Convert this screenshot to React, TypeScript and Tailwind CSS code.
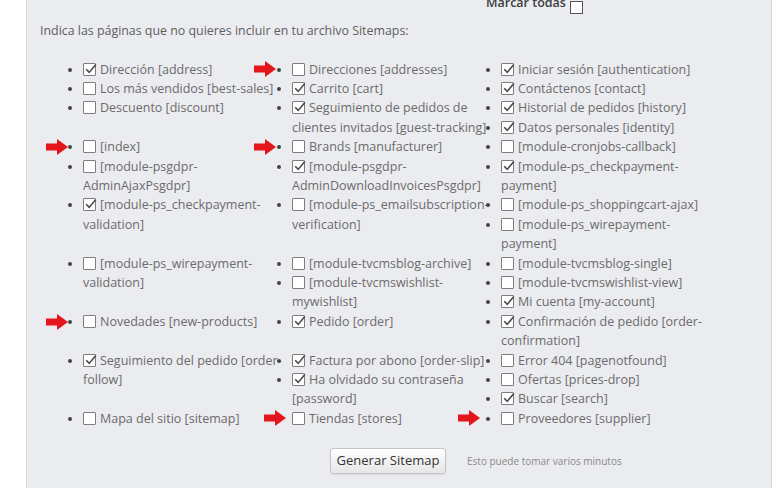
import React from "react";

type Item = { label: string; checked: boolean };

const items: Item[] = [
  { label: "Dirección [address]", checked: true },
  { label: "Direcciones [addresses]", checked: false },
  { label: "Iniciar sesión [authentication]", checked: true },
  { label: "Los más vendidos [best-sales]", checked: false },
  { label: "Carrito [cart]", checked: true },
  { label: "Contáctenos [contact]", checked: true },
  { label: "Descuento [discount]", checked: false },
  { label: "Seguimiento de pedidos de clientes invitados [guest-tracking]", checked: true },
  { label: "Historial de pedidos [history]", checked: true },
  { label: "Datos personales [identity]", checked: true },
  { label: "[index]", checked: false },
  { label: "Brands [manufacturer]", checked: false },
  { label: "[module-cronjobs-callback]", checked: false },
  { label: "[module-psgdpr-AdminAjaxPsgdpr]", checked: false },
  { label: "[module-psgdpr-AdminDownloadInvoicesPsgdpr]", checked: true },
  { label: "[module-ps_checkpayment-payment]", checked: true },
  { label: "[module-ps_checkpayment-validation]", checked: true },
  { label: "[module-ps_emailsubscription-verification]", checked: false },
  { label: "[module-ps_shoppingcart-ajax]", checked: false },
  { label: "[module-ps_wirepayment-payment]", checked: false },
  { label: "[module-ps_wirepayment-validation]", checked: false },
  { label: "[module-tvcmsblog-archive]", checked: false },
  { label: "[module-tvcmsblog-single]", checked: false },
  { label: "[module-tvcmswishlist-mywishlist]", checked: false },
  { label: "[module-tvcmswishlist-view]", checked: false },
  { label: "Mi cuenta [my-account]", checked: true },
  { label: "Novedades [new-products]", checked: false },
  { label: "Pedido [order]", checked: true },
  { label: "Confirmación de pedido [order-confirmation]", checked: true },
  { label: "Seguimiento del pedido [order-follow]", checked: true },
  { label: "Factura por abono [order-slip]", checked: true },
  { label: "Error 404 [pagenotfound]", checked: false },
  { label: "Ha olvidado su contraseña [password]", checked: true },
  { label: "Ofertas [prices-drop]", checked: false },
  { label: "Buscar [search]", checked: true },
  { label: "Mapa del sitio [sitemap]", checked: false },
  { label: "Tiendas [stores]", checked: false },
  { label: "Proveedores [supplier]", checked: false },
];

function Box({ checked }: { checked: boolean }) {
  return (
    <span className="relative inline-block w-[13px] h-[13px] mr-[4px] align-[-2px] border border-[#7d7d7d] bg-white rounded-[1px]">
      {checked && (
        <svg
          className="absolute left-[0px] top-[-2px]"
          width="14"
          height="14"
          viewBox="0 0 14 14"
          fill="none"
        >
          <path d="M2.2 7.2 L5.2 10.4 L11.8 2.6" stroke="#4a4a4a" strokeWidth="1.6" />
        </svg>
      )}
    </span>
  );
}

function Arrow({ className }: { className: string }) {
  return (
    <svg
      className={"absolute " + className}
      width="22"
      height="16"
      viewBox="0 0 22 16"
    >
      <polygon points="0,4.5 11,4.5 11,0 22,8 11,16 11,11.5 0,11.5" fill="#e5161b" />
    </svg>
  );
}

export default function App() {
  return (
    <div className="relative w-[781px] h-[500px] overflow-hidden bg-white font-['Open_Sans',sans-serif]">
      <div className="h-full pl-[26px] pr-[9px] pt-[7px]">
        <div className="h-full bg-[#ebecf0] border-l border-r border-[#d9dadf]">
          <div className="-mt-[12px] h-[21px] flex items-start pl-[459px] gap-[4px] text-[12.5px] leading-[15px] font-semibold text-[#3d3d3d]">
            <span>Marcar todas</span>
            <span className="mt-[6px] inline-block w-[13px] h-[13px] border border-[#555] bg-white" />
          </div>
          <p className="ml-[13px] mt-[4.5px] text-[12.4px] leading-[19px] text-[#5e5e5e]">
            Indica las páginas que no quieres incluir en tu archivo Sitemaps:
          </p>
          <ul className="flow-root ml-[56px] mt-[20px] w-[627px] list-disc text-[12.5px] leading-[19.4px] text-[#6b6b6b] marker:text-[#444] marker:text-[11px]">
            {items.map((it) => (
              <li key={it.label} className="float-left w-1/3">
                <Box checked={it.checked} />
                {it.label}
              </li>
            ))}
          </ul>
          <div className="mt-[20px] flex items-center pl-[303px]">
            <button className="h-[26px] w-[116px] rounded-[3px] border border-[#c4c4c4] bg-gradient-to-b from-white to-[#e6e6e6] text-[13px] text-[#333] shadow-[0_1px_1px_rgba(0,0,0,0.08)]">
              Generar Sitemap
            </button>
            <span className="ml-[21px] text-[10px] text-[#8a8a8a]">
              Esto puede tomar varios minutos
            </span>
          </div>
        </div>
      </div>
      <Arrow className="left-[254px] top-[61px]" />
      <Arrow className="left-[46px] top-[139px]" />
      <Arrow className="left-[254px] top-[139px]" />
      <Arrow className="left-[46px] top-[314px]" />
      <Arrow className="left-[264px] top-[410px]" />
      <Arrow className="left-[458px] top-[410px]" />
    </div>
  );
}
